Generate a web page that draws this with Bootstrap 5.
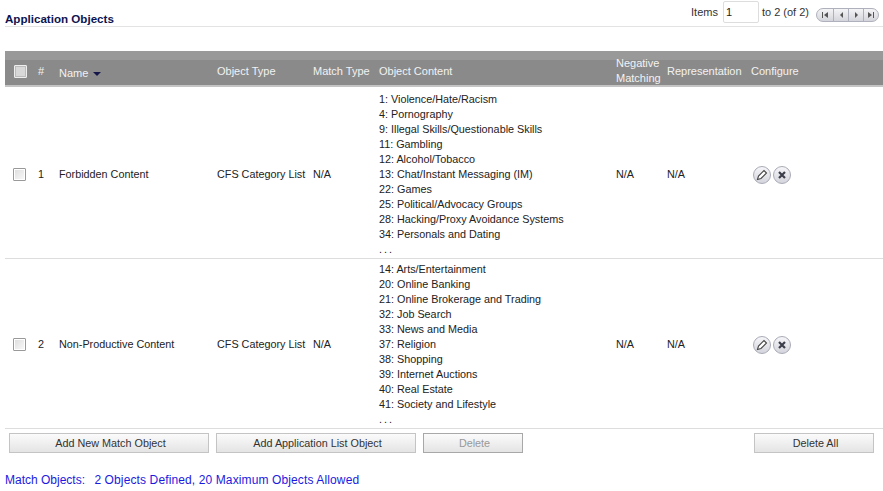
<!DOCTYPE html>
<html lang="en"><head><meta charset="utf-8"><title>Application Objects</title>
<link href="https://cdn.jsdelivr.net/npm/bootstrap@5.3.0/dist/css/bootstrap.min.css" rel="stylesheet">
<style>
html,body{height:491px;overflow:hidden;background:#fff}
body{font:11px/15px "Liberation Sans",Arial,sans-serif;color:#222;padding-left:5px}
.top-bar{height:27px;border-bottom:1px solid #e3e3e3}
.page-title{font-weight:700;font-size:11.6px;color:#0e1350;line-height:13px;margin-bottom:1px}
.pager{color:#333;font-size:11px;padding-right:4px;margin-bottom:3px}
.pager input{width:36px;height:22px;border:1px solid #ddd;border-radius:2px;margin:0 3px 0 5px;padding:0 2px;font:inherit;color:#222}
.pg-group{display:flex;margin-left:7px;height:14px;margin-top:6px;border:1px solid #aeb0bb;border-radius:7px;background:linear-gradient(#f4f4f6,#d4d5dc);overflow:hidden}
.pg-group span{width:15px;display:flex;align-items:center;justify-content:center;border-left:1px solid #aeb0bb}
.pg-group span:first-child{border-left:0;width:16px}
.obj-table{table-layout:fixed;width:878px;margin:24px 0 0;border-collapse:collapse}
.obj-table th{background:#8a8a8a;color:#f2f2f2;font-weight:400;height:35px;padding:7px 0 0;vertical-align:middle;border-top:0;border-bottom:2px solid #c4c4c4;box-shadow:inset 0 9px 0 #999}
.obj-table td{padding:3px 0 1px;vertical-align:middle;border-bottom:1px solid #ddd;color:#222;font-size:10.8px}
.obj-table tbody tr:first-child td{padding-top:5px}
.name-head{position:relative;top:2px}
.chk{width:13px;height:13px;display:block;margin-left:8px;border:1px solid #999;border-radius:1px;background:linear-gradient(135deg,#dcdcdc,#fafafa);box-shadow:inset 0 0 0 1px #fff}
.obj-table th .chk{background:#d8d8d8;border-color:#eee;box-shadow:inset 0 0 0 1px #bbb;margin-left:9px}
.sort{display:inline-block;margin:0 0 1px 5px;border:4px solid transparent;border-top:4px solid #15174a;border-bottom:0}
.neg{line-height:15px;display:block;margin:-4px 0 -3px}
.ic{display:inline-block;width:18px;height:18px;margin-right:2px;vertical-align:middle}
.ic-first{margin-left:2px}
.dots{letter-spacing:2px}
.act-row{display:flex;padding:4px 0 0 4px;width:878px}
.act-btn{height:20px;background:linear-gradient(#fbfbfb,#e4e4e4);border:1px solid #c4c4c4;border-radius:0;font-size:10.8px;line-height:17px;padding:0 0 0 3px;color:#333;margin-right:7px}
.act-btn.off{color:#999;border-color:#a8a8a8}
.foot-note{color:#1a1ae0;font-size:12px;line-height:15px;margin-top:20px}
.foot-note span{margin-left:6px;letter-spacing:.12px}
</style></head><body>
<div class="top-bar d-flex justify-content-between align-items-end">
<div class="page-title">Application Objects</div>
<div class="pager d-flex align-items-center">Items <input type="text" value="1"> to 2 (of 2)
<div class="pg-group">
<span><svg width="7" height="6"><path d="M0 0h1v6H0zM6 0v6L2 3z" fill="#555"/></svg></span>
<span><svg width="5" height="6"><path d="M4 0v6L1 3z" fill="#555"/></svg></span>
<span><svg width="5" height="6"><path d="M1 0v6l3-3z" fill="#555"/></svg></span>
<span><svg width="7" height="6"><path d="M0 0v6l4-3zM5 0h1v6H5z" fill="#555"/></svg></span>
</div></div></div>
<table class="obj-table">
<colgroup><col style="width:33px"><col style="width:21px"><col style="width:158px"><col style="width:96px"><col style="width:66px"><col style="width:237px"><col style="width:51px"><col style="width:84px"><col></colgroup>
<thead><tr><th><i class="chk"></i></th><th>#</th><th><span class="name-head">Name<i class="sort"></i></span></th><th>Object Type</th><th>Match Type</th><th>Object Content</th><th><span class="neg">Negative Matching</span></th><th>Representation</th><th>Configure</th></tr></thead>
<tbody>
<tr><td><i class="chk"></i></td><td>1</td><td>Forbidden Content</td><td>CFS Category List</td><td>N/A</td>
<td>1: Violence/Hate/Racism<br>4: Pornography<br>9: Illegal Skills/Questionable Skills<br>11: Gambling<br>12: Alcohol/Tobacco<br>13: Chat/Instant Messaging (IM)<br>22: Games<br>25: Political/Advocacy Groups<br>28: Hacking/Proxy Avoidance Systems<br>34: Personals and Dating<br><span class="dots">...</span></td>
<td>N/A</td><td>N/A</td><td>
<svg class="ic ic-first" viewBox="0 0 18 18"><defs><linearGradient id="g" x1="0" y1="0" x2="0" y2="1"><stop offset="0" stop-color="#f7f7fa"/><stop offset="1" stop-color="#d3d4dc"/></linearGradient></defs><circle cx="9" cy="9" r="8.5" fill="url(#g)" stroke="#a9abb6"/><path d="M4.5 13.5l1-3.5 5.5-5.5 2.5 2.5-5.5 5.5z" fill="#fff" stroke="#444" stroke-width="1.1"/></svg><svg class="ic" viewBox="0 0 18 18"><circle cx="9" cy="9" r="8.5" fill="url(#g)" stroke="#a9abb6"/><path d="M6 6l6 6M12 6l-6 6" stroke="#3c3f4a" stroke-width="2.2"/></svg></td></tr>
<tr><td><i class="chk"></i></td><td>2</td><td>Non-Productive Content</td><td>CFS Category List</td><td>N/A</td>
<td>14: Arts/Entertainment<br>20: Online Banking<br>21: Online Brokerage and Trading<br>32: Job Search<br>33: News and Media<br>37: Religion<br>38: Shopping<br>39: Internet Auctions<br>40: Real Estate<br>41: Society and Lifestyle<br><span class="dots">...</span></td>
<td>N/A</td><td>N/A</td><td>
<svg class="ic ic-first" viewBox="0 0 18 18"><circle cx="9" cy="9" r="8.5" fill="url(#g)" stroke="#a9abb6"/><path d="M4.5 13.5l1-3.5 5.5-5.5 2.5 2.5-5.5 5.5z" fill="#fff" stroke="#444" stroke-width="1.1"/></svg><svg class="ic" viewBox="0 0 18 18"><circle cx="9" cy="9" r="8.5" fill="url(#g)" stroke="#a9abb6"/><path d="M6 6l6 6M12 6l-6 6" stroke="#3c3f4a" stroke-width="2.2"/></svg></td></tr>
</tbody></table>
<div class="act-row">
<button class="act-btn" style="width:200px">Add New Match Object</button>
<button class="act-btn" style="width:200px">Add Application List Object</button>
<button class="act-btn off" style="width:100px">Delete</button>
<button class="act-btn ms-auto" style="width:120px;margin-right:9px">Delete All</button>
</div>
<div class="foot-note">Match Objects: <span>2 Objects Defined, 20 Maximum Objects Allowed</span></div>
</body></html>
